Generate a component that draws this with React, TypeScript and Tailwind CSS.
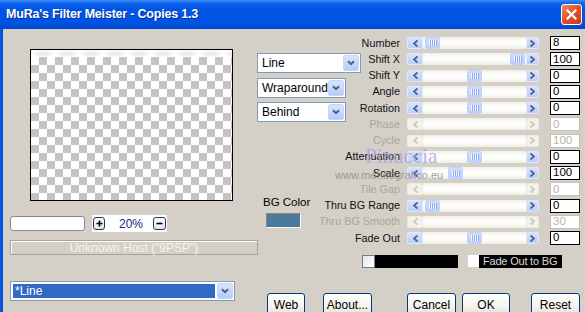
import React from 'react';

type Row = { label: string; value: string; thumb?: number; disabled?: boolean };

const rows: Row[] = [
  { label: 'Number', value: '8', thumb: 2 },
  { label: 'Shift X', value: '100', thumb: 87 },
  { label: 'Shift Y', value: '0', thumb: 44 },
  { label: 'Angle', value: '0', thumb: 44 },
  { label: 'Rotation', value: '0', thumb: 44 },
  { label: 'Phase', value: '0', disabled: true },
  { label: 'Cycle', value: '100', disabled: true },
  { label: 'Attenuation', value: '0', thumb: 44 },
  { label: 'Scale', value: '100', thumb: 25 },
  { label: 'Tile Gap', value: '0', disabled: true },
  { label: 'Thru BG Range', value: '0', thumb: 2 },
  { label: 'Thru BG Smooth', value: '30', disabled: true },
  { label: 'Fade Out', value: '0', thumb: 44 },
];

const FONT = { fontFamily: '"Liberation Sans", Arial, sans-serif' };

function Arrow({ dir, disabled, w }: { dir: 'left' | 'right'; disabled?: boolean; w: string }) {
  return (
    <div
      className={`${w} h-full shrink-0 rounded-[2px] border flex items-center justify-center ${
        disabled
          ? 'border-[#eceae2] bg-[#f2f1ea]'
          : 'border-[#dfe8fd] bg-[linear-gradient(to_bottom,#d6e2fd,#bccffa)]'
      }`}
    >
      <svg width="5" height="7" viewBox="0 0 5 7">
        <path
          d={dir === 'left' ? 'M4.5 0.5 L1 3.5 L4.5 6.5' : 'M0.5 0.5 L4 3.5 L0.5 6.5'}
          fill="none"
          stroke={disabled ? '#cac8bc' : '#4d6185'}
          strokeWidth="1.8"
        />
      </svg>
    </div>
  );
}

function ScrollBar({ thumb, disabled }: { thumb?: number; disabled?: boolean }) {
  return (
    <div className="w-[132px] h-[12px] flex shrink-0">
      <Arrow dir="left" disabled={disabled} w="w-[16px]" />
      <div className="flex-1 h-full flex bg-[linear-gradient(to_bottom,#f1efe6,#fdfdfb_35%,#fdfdfb_65%,#eeece3)]">
        {!disabled && thumb !== undefined && (
          <div
            className="w-[15px] h-full rounded-[2px] border border-[#c2d3fb] bg-[linear-gradient(to_bottom,#d0ddfd,#bccffa)] flex items-center justify-center"
            style={{ marginLeft: thumb }}
          >
            <div className="w-[8px] h-[6px] bg-[repeating-linear-gradient(to_right,#f4f7fe_0px,#f4f7fe_1px,#8eabf0_1px,#8eabf0_2px)]" />
          </div>
        )}
      </div>
      <Arrow dir="right" disabled={disabled} w="w-[13px]" />
    </div>
  );
}

function Chevron() {
  return (
    <svg width="8" height="6" viewBox="0 0 8 6">
      <path d="M1 1.2 L4 4.2 L7 1.2" fill="none" stroke="#4d6185" strokeWidth="2" />
    </svg>
  );
}

function Combo({ text, w, selected }: { text: string; w: string; selected?: boolean }) {
  return (
    <div className={`${w} h-[20px] border border-[#7f9db9] bg-white flex p-[1px] shrink-0`}>
      <div className={`flex-1 flex items-center ${selected ? 'bg-[#316ac5] text-white m-[1px] mr-[2px] pl-[2px]' : 'text-black pl-[3px]'} text-[12px]`}>
        {text}
      </div>
      <div className="w-[16px] h-full rounded-[2px] border border-[#c6d6fb] bg-[linear-gradient(to_bottom,#d9e4fd,#b5cbf9)] flex items-center justify-center">
        <Chevron />
      </div>
    </div>
  );
}

function XPButton({ label, w, ml }: { label: string; w: string; ml: string }) {
  return (
    <div
      className={`${w} ${ml} h-[23px] shrink-0 rounded-[3px] border border-[#003c74] bg-[linear-gradient(to_bottom,#ffffff,#f4f3ee_60%,#e3e0d6)] flex items-center justify-center text-[12px] text-black`}
    >
      {label}
    </div>
  );
}

export default function App() {
  return (
    <div className="w-[585px] h-[312px] overflow-hidden relative bg-[#d4d0c8] flex flex-col" style={FONT}>
      {/* Title bar */}
      <div className="h-[29px] shrink-0 flex items-center justify-between bg-[linear-gradient(to_bottom,#3c8ef8_0%,#0d62ec_12%,#0055e5_30%,#0054e3_75%,#0049d0_100%)]">
        <div className="pl-[6px] text-white font-bold text-[12.5px] tracking-[-0.2px] [text-shadow:1px_1px_0_#0a2e9e]">
          MuRa's Filter Meister - Copies 1.3
        </div>
        <div className="mr-[3px] w-[21px] h-[21px] rounded-[3px] border border-white bg-[linear-gradient(135deg,#f08a66,#e0502a_50%,#c83c18)] flex items-center justify-center">
          <svg width="11" height="11" viewBox="0 0 11 11">
            <path d="M1.5 1.5 L9.5 9.5 M9.5 1.5 L1.5 9.5" stroke="white" strokeWidth="2.2" strokeLinecap="square" />
          </svg>
        </div>
      </div>

      {/* Body */}
      <div className="flex-1 flex min-h-0">
        <div className="w-[3px] shrink-0 bg-[linear-gradient(to_right,#0a5ae8,#0048d0)]" />

        {/* Left column */}
        <div className="w-[254px] shrink-0 flex flex-col pl-[7px]">
          <div className="ml-[20px] mt-[20px] w-[203px] h-[152px] border border-black bg-white p-0 flex flex-col overflow-hidden">
            <div className="h-[7px] shrink-0 bg-[radial-gradient(ellipse_at_center,#e4e4e4_0%,#f7f7f7_55%,#ffffff_70%)] bg-[length:24px_7px]" />
            <div className="flex-1 bg-[conic-gradient(#c4c4c4_25%,#ffffff_0_50%,#c4c4c4_0_75%,#ffffff_0)] bg-[length:16px_16px]" />
          </div>

          <div className="mt-[14px] h-[17px] flex items-center">
            <div className="w-[75px] h-[15px] rounded-[3px] border border-[#8a8a8a] bg-white" />
            <div className="ml-[7px] w-[75px] h-[17px] bg-white flex items-center">
              <div className="ml-[1px] w-[12px] h-[13px] rounded-[3px] border border-[#1c3a6e] bg-[linear-gradient(to_bottom,#ffffff,#e6e3da)] flex items-center justify-center">
                <svg width="7" height="7" viewBox="0 0 7 7">
                  <path d="M3.5 0.5 V6.5 M0.5 3.5 H6.5" stroke="black" strokeWidth="1.6" />
                </svg>
              </div>
              <div className="ml-[14px] w-[20px] text-[12px] text-[#1a237e] leading-none">20%</div>
              <div className="ml-[14px] w-[13px] h-[13px] rounded-[3px] border border-[#1c3a6e] bg-[linear-gradient(to_bottom,#ffffff,#e6e3da)] flex items-center justify-center">
                <svg width="7" height="7" viewBox="0 0 7 7">
                  <path d="M0.5 3.5 H6.5" stroke="black" strokeWidth="1.6" />
                </svg>
              </div>
            </div>
          </div>

          <div className="mt-[8px] w-[248px] h-[15px] border border-[#a8a598] shadow-[inset_1px_1px_0_#ffffff] flex items-center justify-center text-[12px] text-[#f4f3ef] leading-none">
            Unknown Host ("9PSP")
          </div>

          <div className="mt-[26px]">
            <Combo text="*Line" w="w-[225px]" selected />
          </div>
        </div>

        {/* Right side */}
        <div className="flex-1 flex flex-col">
          <div className="flex">
            {/* Middle column */}
            <div className="w-[105px] shrink-0 flex flex-col">
              <div className="mt-[24px]">
                <Combo text="Line" w="w-[104px]" />
              </div>
              <div className="mt-[5px]">
                <Combo text="Wraparound" w="w-[89px]" />
              </div>
              <div className="mt-[4px]">
                <Combo text="Behind" w="w-[89px]" />
              </div>
              <div className="mt-[74px] ml-[6px] text-[11.5px] leading-[13px] text-black">BG Color</div>
              <div className="mt-[4px] ml-[9px] w-[35px] h-[15px] border border-[#8e8878] border-r-white border-b-white bg-[#4c7a9c]" />
            </div>

            {/* Right column */}
            <div className="flex-1 flex flex-col pt-[6px]">
              {rows.map((r) => (
                <div key={r.label} className="h-[16.25px] flex items-center">
                  <div
                    className={`w-[38px] shrink-0 flex justify-end whitespace-nowrap text-[10.8px] leading-none ${
                      r.disabled ? 'text-[#a9a699]' : 'text-[#111]'
                    }`}
                  >
                    {r.label}
                  </div>
                  <div className="ml-[7px]">
                    <ScrollBar thumb={r.thumb} disabled={r.disabled} />
                  </div>
                  <div
                    className={`ml-[11px] w-[30px] h-[14px] shrink-0 border bg-white flex items-center pl-[2px] text-[11.5px] leading-none ${
                      r.disabled ? 'border-[#c5c2b5] text-[#b8b5a8]' : 'border-black text-black'
                    }`}
                  >
                    {r.value}
                  </div>
                </div>
              ))}

              <div className="mt-[9px] h-[13px] flex">
                <div className="w-[13px] h-[13px] border border-[#6f7f93] bg-[linear-gradient(135deg,#e6e6e6,#ffffff)]" />
                <div className="w-[83px] h-[13px] bg-black" />
                <div className="ml-[10px] w-[11px] h-[12px] bg-white" />
                <div className="w-[83px] h-[13px] bg-black flex items-center pl-[4px] whitespace-nowrap overflow-hidden text-[11px] tracking-[-0.2px] text-[#d8d8d8] leading-none">
                  Fade Out to BG
                </div>
              </div>
            </div>
          </div>

          <div className="mt-[25px] flex">
            <XPButton label="Web" w="w-[38px]" ml="ml-[10px]" />
            <XPButton label="About..." w="w-[49px]" ml="ml-[18px]" />
            <XPButton label="Cancel" w="w-[49px]" ml="ml-[35px]" />
            <XPButton label="OK" w="w-[48px]" ml="ml-[6px]" />
            <XPButton label="Reset" w="w-[49px]" ml="ml-[21px]" />
          </div>
        </div>
      </div>

      {/* Watermark overlay */}
      <div className="absolute left-[365px] top-[146px] text-[21px] leading-none text-[#aaa3dc] opacity-80 pointer-events-none" style={{ fontFamily: '"Liberation Serif", serif' }}>
        Pinuccia
      </div>
      <div className="absolute left-[335px] top-[170px] text-[11px] leading-none text-[#8f8b86] opacity-80 pointer-events-none">
        www.mondografico.eu
      </div>
    </div>
  );
}
